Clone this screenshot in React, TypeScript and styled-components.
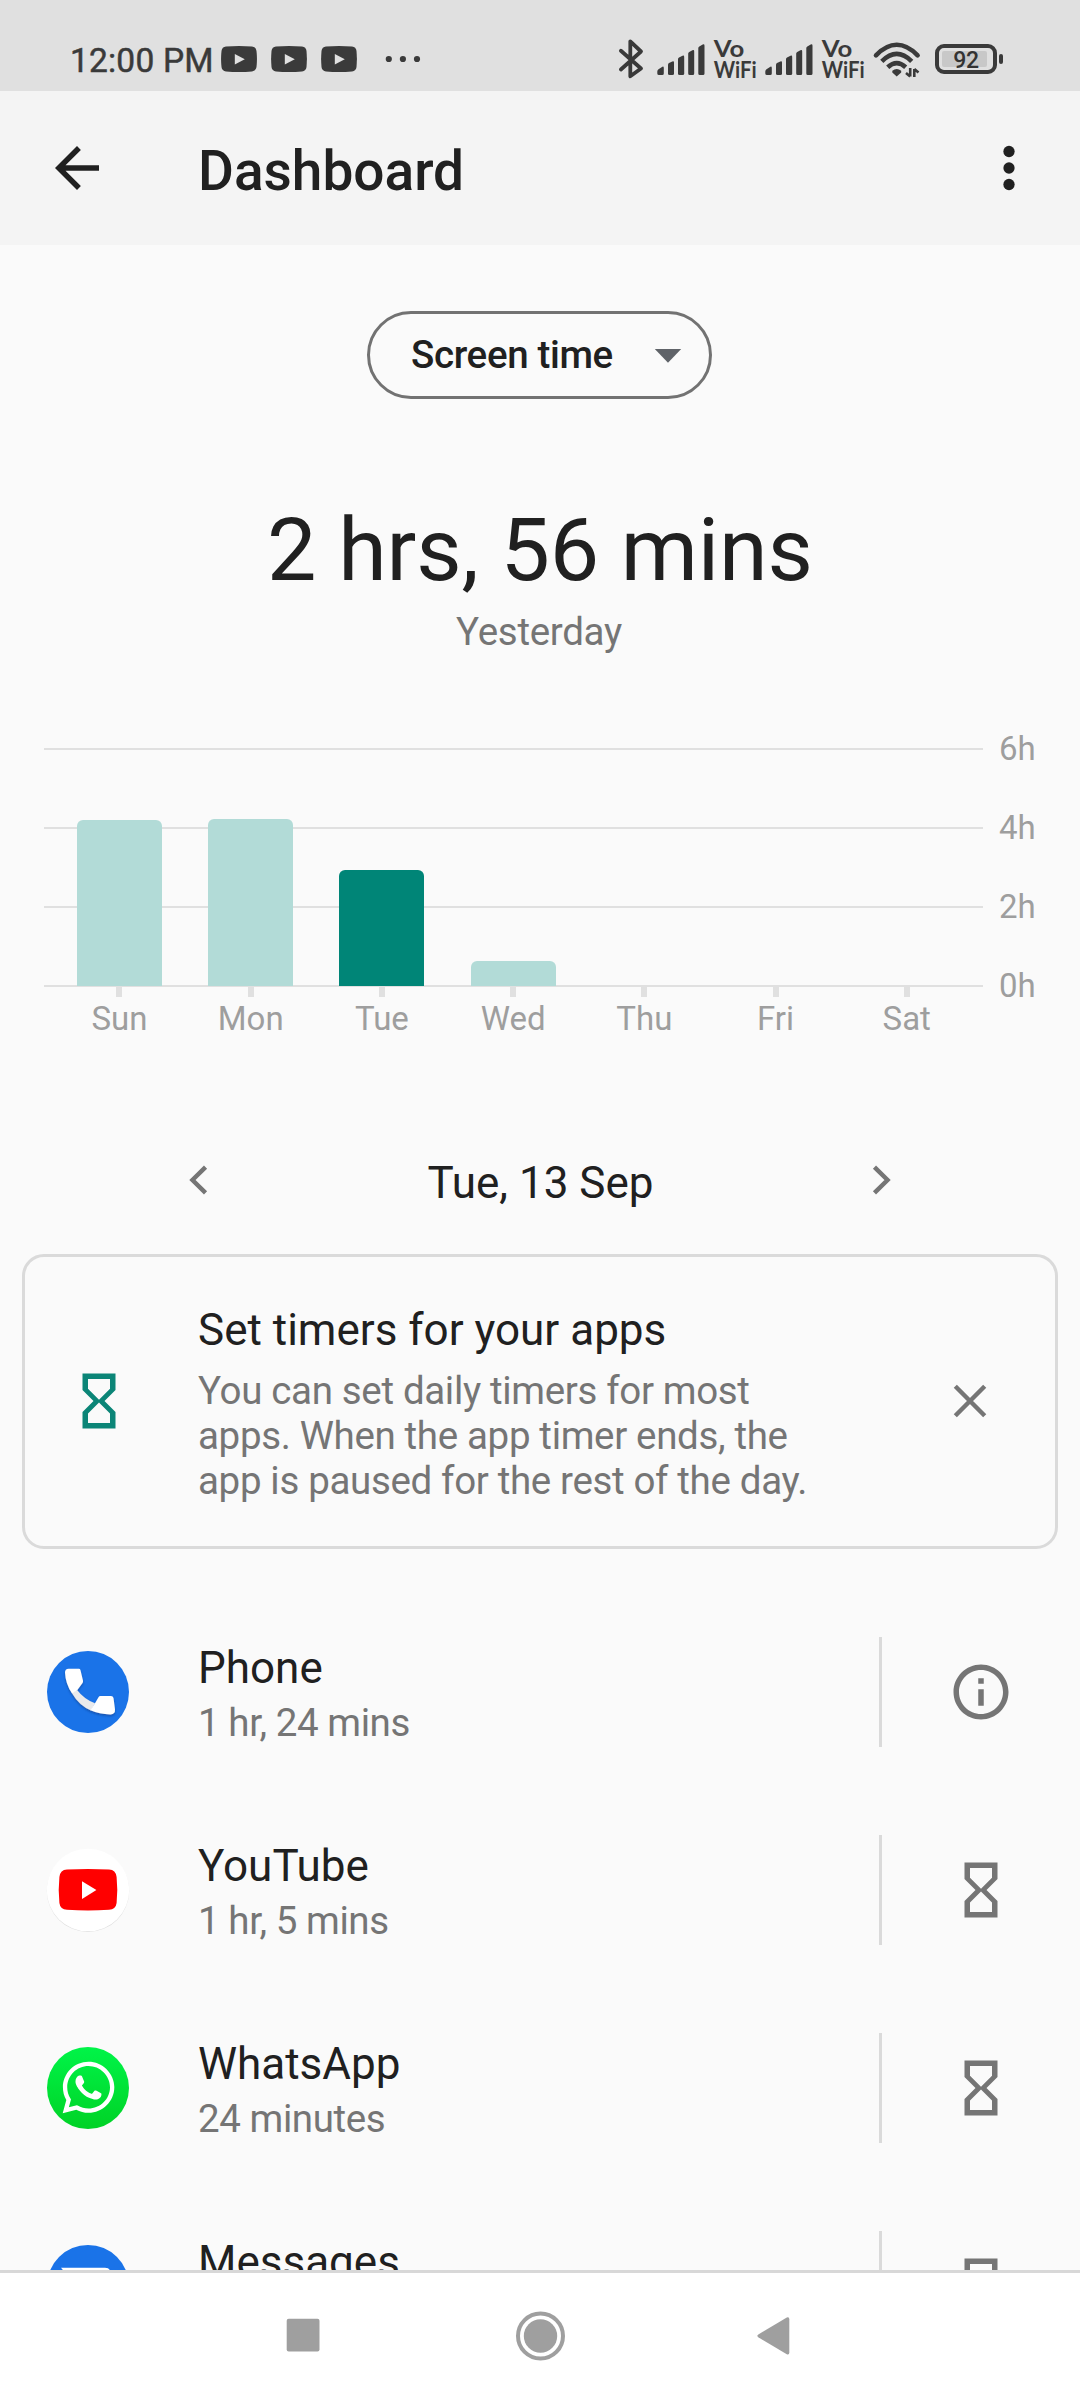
import React from 'react';
import styled, { createGlobalStyle } from 'styled-components';
import { FaWhatsapp } from 'react-icons/fa';

const GlobalStyle = createGlobalStyle`
  body {
    margin: 0;
    background: #fafafa;
  }
`;

const ink = '#202020';
const muted = '#757575';
const rule = '#dadada';

const Screen = styled.div`
  display: flex;
  flex-direction: column;
  width: 1080px;
  height: 2400px;
  overflow: hidden;
  background: #fafafa;
  color: ${ink};
  font-family: Roboto, 'Noto Sans', sans-serif;
`;

/* ---------- status bar ---------- */

const StatusBar = styled.div`
  display: flex;
  justify-content: space-between;
  box-sizing: border-box;
  height: 91px;
  padding: 27px 77px 0 70px;
  background: #e0e0e0;
  color: #3a3a3a;
`;

const StatusGroup = styled.div`
  display: flex;
  align-items: flex-start;
  height: 64px;
`;

const Clock = styled.span`
  width: 151px;
  padding-top: 14px;
  font-size: 33.5px;
  line-height: 40px;
  letter-spacing: 0.2px;
  white-space: nowrap;
  -webkit-text-stroke: 0.5px currentColor;
`;

const NotificationIcons = styled.div`
  display: flex;
  gap: 14px;
  margin-right: 28px;
`;

const StatusGlyph = styled.svg<{ $gap?: number }>`
  display: block;
  flex: none;
  margin-left: ${(p) => p.$gap ?? 0}px;
  overflow: visible;
`;

const CarrierText = styled.text`
  fill: #3a3a3a;
  font-family: Lato, sans-serif;
  font-size: 23.3px;
  font-weight: 700;
`;

const Battery = styled.div`
  display: flex;
  align-items: center;
  height: 30px;
  margin: 17px 0 0 15px;
`;

const BatteryShell = styled.div`
  box-sizing: border-box;
  display: flex;
  width: 62px;
  height: 30px;
  padding: 3px;
  border: 4px solid #3a3a3a;
  border-radius: 9px;
`;

const BatteryCharge = styled.div`
  width: 45px;
  height: 16px;
  border-radius: 2px;
  background: #c8c8c8;
  color: #333;
  font-size: 23px;
  font-weight: 500;
  line-height: 20px;
  text-align: center;
  text-indent: 3px;
  letter-spacing: -0.4px;
`;

const BatteryNub = styled.div`
  width: 4px;
  height: 10px;
  margin-left: 2px;
  border-radius: 2px;
  background: #3a3a3a;
`;

const SignalBars = ({ gap }: { gap: number }) => (
  <StatusGlyph $gap={gap} width="48" height="64" viewBox="0 0 48 64" fill="#3a3a3a">
    <path d="M0.3 44.5Q0.3 43 1.5 42.3L5 39.9Q6.8 39 6.8 41V46.5Q6.8 48 5.3 48H2Q0.3 48 0.3 46.5Z" />
    <path d="M11 37.5Q11 36.6 12 36L15.3 34.5Q17 33.8 17 35.5V46.5Q17 48 15.5 48H12.5Q11 48 11 46.5Z" />
    <path d="M21 32Q21 31 22 30.5L25.5 28.8Q27.2 28 27.2 30V46.5Q27.2 48 25.7 48H22.5Q21 48 21 46.5Z" />
    <path d="M31.2 26.5Q31.2 25.5 32.2 25L35.4 23.3Q37.2 22.5 37.2 24.5V46.5Q37.2 48 35.7 48H32.7Q31.2 48 31.2 46.5Z" />
    <path d="M41.3 21Q41.3 20 42.3 19.5L45.7 17.6Q47.5 16.8 47.5 18.8V46.5Q47.5 48 46 48H42.8Q41.3 48 41.3 46.5Z" />
  </StatusGlyph>
);

const VoWifi = ({ gap }: { gap: number }) => (
  <StatusGlyph $gap={gap} width="42" height="64" viewBox="0 0 42 64">
    <CarrierText x="-0.3" y="29.9" textLength="30.6" lengthAdjust="spacingAndGlyphs">
      Vo
    </CarrierText>
    <CarrierText x="-0.3" y="51.4" textLength="43" lengthAdjust="spacingAndGlyphs">
      WiFi
    </CarrierText>
  </StatusGlyph>
);

const VideoBadge = () => (
  <StatusGlyph width="36" height="64" viewBox="0 0 36 64">
    <path
      fill="#3a3a3a"
      d="M5 19.6Q18 18.4 31 19.6Q35 20 35.5 24Q36.4 32 35.5 40Q35 44 31 44.4Q18 45.4 5 44.4Q1 44 .5 40Q-.4 32 .5 24Q1 20 5 19.6Z"
    />
    <path fill="#e0e0e0" d="M13.8 27V37.6L23.8 32.3Z" />
  </StatusGlyph>
);

/* ---------- app bar ---------- */

const AppBar = styled.header`
  display: flex;
  align-items: center;
  box-sizing: border-box;
  height: 154px;
  padding: 0 38px 0 44px;
  background: #f4f4f4;
`;

const Title = styled.h1`
  flex: 1;
  margin: 5px 0 0 88px;
  font-size: 55px;
  font-weight: 500;
  line-height: 64px;
`;

const Icon = styled.svg<{ $size: number; $color: string }>`
  display: block;
  flex: none;
  width: ${(p) => p.$size}px;
  height: ${(p) => p.$size}px;
  fill: ${(p) => p.$color};
`;

const LineIcon = styled.svg`
  display: block;
  flex: none;
  width: 56px;
  height: 56px;
  fill: none;
  stroke: ${muted};
  stroke-width: 1.9;
`;

/* ---------- summary ---------- */

const Content = styled.main`
  display: flex;
  flex: 1;
  flex-direction: column;
  min-height: 0;
  overflow: hidden;
`;

const MetricSelect = styled.button`
  box-sizing: border-box;
  display: flex;
  flex: none;
  align-items: center;
  align-self: center;
  justify-content: space-between;
  width: 345px;
  height: 88px;
  margin: 66px 1px 0 0;
  padding: 0 8px 0 41px;
  border: 3px solid #727272;
  border-radius: 44px;
  background: none;
  color: ${ink};
  font: 500 38.5px/46px Roboto, sans-serif;
  letter-spacing: -0.35px;
`;

const Total = styled.div`
  flex: none;
  margin-top: 99px;
  font-size: 88px;
  line-height: 104px;
  letter-spacing: -0.12px;
  text-align: center;
`;

const TotalDay = styled.div`
  flex: none;
  margin-top: 7px;
  padding-right: 2px;
  color: ${muted};
  font-size: 38.5px;
  line-height: 46px;
  letter-spacing: -0.3px;
  text-align: center;
`;

/* ---------- chart ---------- */

const Chart = styled.section`
  display: flex;
  flex: none;
  gap: 16px;
  height: 291px;
  margin: 93px 0 0 44px;
  color: #9e9e9e;
  font-size: 33px;
  line-height: 40px;
`;

const Plot = styled.div`
  display: grid;
  width: 939px;
`;

const GridLines = styled.div`
  display: flex;
  grid-area: 1 / 1;
  flex-direction: column;
  justify-content: space-between;
  height: 239px;
`;

const GridLine = styled.div`
  height: 2px;
  background: #e0e0e0;
`;

const Days = styled.div`
  display: grid;
  grid-area: 1 / 1;
  grid-template-columns: repeat(7, 1fr);
  padding: 0 10.7px 0 9.9px;
`;

const Day = styled.div`
  display: grid;
  grid-template-rows: 238px 11px 40px;
  justify-items: center;
`;

const Bar = styled.div<{ $height: number; $active: boolean }>`
  align-self: end;
  width: 85px;
  height: ${(p) => p.$height}px;
  border-radius: 6px 6px 0 0;
  background: ${(p) => (p.$active ? '#008577' : '#b2dbd7')};
`;

const Tick = styled.div`
  width: 6px;
  background: #e0e0e0;
`;

const DayName = styled.span`
  padding-top: 2px;
`;

const HourScale = styled.div`
  display: flex;
  flex-direction: column;
  justify-content: space-between;
  height: 277px;
  margin-top: -19px;
`;

const days = [
  { name: 'Sun', height: 166 },
  { name: 'Mon', height: 167 },
  { name: 'Tue', height: 116, active: true },
  { name: 'Wed', height: 25 },
  { name: 'Thu', height: 0 },
  { name: 'Fri', height: 0 },
  { name: 'Sat', height: 0 },
];

const hours = ['6h', '4h', '2h', '0h'];

/* ---------- date switcher ---------- */

const DateRow = styled.div`
  display: flex;
  flex: none;
  justify-content: space-between;
  height: 57px;
  margin-top: 113px;
  padding: 0 171px;
`;

const DateText = styled.span`
  padding: 5px 0 0 1px;
  font-size: 44px;
  line-height: 52px;
`;

/* ---------- tip card ---------- */

const TipCard = styled.section`
  box-sizing: border-box;
  display: flex;
  flex: none;
  align-items: center;
  height: 295px;
  margin: 45px 22px 0;
  padding: 0 57px 1px 41px;
  border: 3px solid ${rule};
  border-radius: 22px;
`;

const TipText = styled.div`
  flex: 1;
  align-self: flex-start;
  padding: 47px 0 0 66px;
`;

const ItemTitle = styled.div`
  font-size: 44px;
  line-height: 52px;
`;

const TipBody = styled.p`
  width: 620px;
  margin: 12px 0 0;
  color: ${muted};
  font-size: 38.5px;
  line-height: 45px;
  letter-spacing: -0.34px;
`;

/* ---------- app list ---------- */

const AppList = styled.ul`
  flex: none;
  margin: 44px 0 0;
  padding: 0;
  list-style: none;
`;

const AppRow = styled.li`
  display: flex;
  align-items: center;
  height: 198px;
  padding: 0 66px 0 47px;
`;

const AppText = styled.div`
  flex: 1;
  min-height: 104px;
  padding: 4px 0 0 69px;
`;

const AppTime = styled.div`
  margin-top: 6px;
  color: ${muted};
  font-size: 38.5px;
  line-height: 46px;
  letter-spacing: -0.42px;
`;

const Divider = styled.div`
  width: 3px;
  height: 110px;
  margin-right: 66px;
  background: ${rule};
`;

const AppIcon = styled.svg`
  display: block;
  flex: none;
  width: 82px;
  height: 82px;
  overflow: visible;
`;

const WhatsAppDisc = styled.div`
  box-sizing: border-box;
  display: flex;
  flex: none;
  justify-content: center;
  width: 82px;
  height: 82px;
  padding-top: 11px;
  border-radius: 50%;
  background: linear-gradient(#00f448, #00d226);
  color: #fff;
`;

const HourglassIcon = ({ color }: { color: string }) => (
  <Icon $size={66} $color={color} viewBox="0 0 24 24">
    <path d="M6 2v6h.01L6 8.01 10 12l-4 4 .01.01H6V22h12v-5.99h-.01L18 16l-4-4 4-3.99-.01-.01H18V2H6zm10 14.5V20H8v-3.5l4-4 4 4zm-4-5l-4-4V4h8v3.5l-4 4z" />
  </Icon>
);

const InfoIcon = () => (
  <Icon $size={66} $color={muted} viewBox="0 0 24 24">
    <path d="M11 7h2v2h-2zm0 4h2v6h-2zm1-9C6.48 2 2 6.48 2 12s4.48 10 10 10 10-4.48 10-10S17.52 2 12 2zm0 18c-4.41 0-8-3.59-8-8s3.59-8 8-8 8 3.59 8 8-3.59 8-8 8z" />
  </Icon>
);

const PhoneLogo = () => (
  <AppIcon viewBox="0 0 82 82">
    <defs>
      <filter id="handsetShadow" x="-20%" y="-20%" width="140%" height="150%">
        <feDropShadow dx="0" dy="1.6" stdDeviation="1.3" floodColor="#0b3a86" floodOpacity="0.6" />
      </filter>
    </defs>
    <circle cx="41" cy="41" r="41" fill="#1a73e8" />
    <g filter="url(#handsetShadow)">
      <path fill="#e9eaec" d="M24.5 41.5L30.3 39.2Q37 48 48 52.3L44 59.5Q32 54.5 24.5 41.5Z" />
      <path fill="#fff" d="M21.6 17.8H31.8Q33.2 17.8 33.5 19.2L36 29.8Q36.2 31 35.5 32L30 39.5L25 42.3Q18.5 33 18 21.5Q18 18 21.6 17.8Z" />
      <path fill="#fff" d="M53.5 45H64Q66 45 66.5 47L68 58.5Q68.3 63.3 63.5 63.4Q52.5 63.3 43.5 59.3L48 52.3L51.5 46.3Q52.1 45 53.5 45Z" />
    </g>
  </AppIcon>
);

const YouTubeLogo = () => (
  <AppIcon viewBox="0 0 82 82">
    <circle cx="41" cy="41.8" r="41.2" fill="#dedede" />
    <circle cx="41" cy="41" r="41.3" fill="#fff" />
    <path
      fill="#f00"
      d="M20 20.6Q41 19.2 62 20.6Q68.8 21 69.6 28Q71 41 69.6 54Q68.8 60.400 62 60.800Q41 62 20 60.800Q13.2 60.400 12.4 54Q11 41 12.4 28Q13.2 21 20 20.6Z"
    />
    <path fill="#fff" d="M35 32.3V50L49.4 41.1Z" />
  </AppIcon>
);

const WhatsAppLogo = () => (
  <WhatsAppDisc>
    <FaWhatsapp size={59} />
  </WhatsAppDisc>
);

const MessagesLogo = () => (
  <AppIcon viewBox="0 0 82 82">
    <circle cx="41" cy="41" r="41" fill="#1a73e8" />
    <path fill="#fff" d="M14 22.7H58Q63.5 22.7 63.5 28V52Q63.5 57.5 58 57.5H27Q21.5 57.5 21.5 52V32Z" />
  </AppIcon>
);

const apps = [
  { name: 'Phone', time: '1 hr, 24 mins', Logo: PhoneLogo, info: true },
  { name: 'YouTube', time: '1 hr, 5 mins', Logo: YouTubeLogo },
  { name: 'WhatsApp', time: '24 minutes', Logo: WhatsAppLogo },
  { name: 'Messages', Logo: MessagesLogo },
];

/* ---------- navigation bar ---------- */

const NavBar = styled.nav`
  box-sizing: border-box;
  display: flex;
  flex: none;
  align-items: center;
  justify-content: center;
  gap: 175px;
  height: 130px;
  border-top: 3px solid #d8d8d8;
  background: #fff;
`;

const NavIcon = styled.svg`
  display: block;
  width: 60px;
  height: 60px;
  fill: #9f9f9f;
`;

export default function App() {
  return (
    <Screen>
      <GlobalStyle />
      <StatusBar>
        <StatusGroup>
          <Clock>12:00 PM</Clock>
          <NotificationIcons>
            <VideoBadge />
            <VideoBadge />
            <VideoBadge />
          </NotificationIcons>
          <StatusGlyph width="36" height="64" viewBox="0 0 36 64" fill="#3a3a3a">
            <circle cx="3.8" cy="32" r="3.1" />
            <circle cx="17.9" cy="32" r="3.1" />
            <circle cx="32" cy="32" r="3.1" />
          </StatusGlyph>
        </StatusGroup>
        <StatusGroup>
          <StatusGlyph width="24" height="64" viewBox="0 0 24 64" fill="none" stroke="#3a3a3a" strokeWidth="3.8" strokeLinecap="round" strokeLinejoin="round">
            <path d="M1.9 23.8L22 41.5L11.3 49.3V14.3L22 24.5L1.9 42.5" />
          </StatusGlyph>
          <SignalBars gap={14} />
          <VoWifi gap={9} />
          <SignalBars gap={9} />
          <VoWifi gap={9} />
          <StatusGlyph $gap={10} width="46" height="64" viewBox="0 0 46 64" fill="none" stroke="#3a3a3a" strokeWidth="4.6">
            <path d="M2 28.3Q22.7 7.3 43.6 28.3" strokeLinecap="round" />
            <path d="M7.8 34.3Q22.7 19.5 37.7 34.3" />
            <path d="M13.7 40.3Q22.7 32.1 31.7 40.3" />
            <path d="M18.3 43.7Q22.7 40.5 27.2 43.7V45.5L22.7 49.4L18.3 45.5Z" fill="#3a3a3a" stroke="none" />
            <path d="M36.2 41V49.5M36.2 49.5L32 46M40.3 50V42M40.3 42L44.5 45.5" strokeWidth="2.6" />
          </StatusGlyph>
          <Battery>
            <BatteryShell>
              <BatteryCharge>92</BatteryCharge>
            </BatteryShell>
            <BatteryNub />
          </Battery>
        </StatusGroup>
      </StatusBar>

      <AppBar>
        <Icon $size={66} $color={ink} viewBox="0 0 24 24">
          <path d="M20 11H7.83l5.59-5.59L12 4l-8 8 8 8 1.41-1.41L7.83 13H20v-2z" />
        </Icon>
        <Title>Dashboard</Title>
        <Icon $size={66} $color={ink} viewBox="0 0 24 24">
          <circle cx="12" cy="6" r="2.05" />
          <circle cx="12" cy="12" r="2.05" />
          <circle cx="12" cy="18" r="2.05" />
        </Icon>
      </AppBar>

      <Content>
        <MetricSelect>
          Screen time
          <Icon $size={66} $color="#5f6368" viewBox="0 0 24 24">
            <path d="M7.2 9.8l4.8 5 4.8-5z" />
          </Icon>
        </MetricSelect>
        <Total>2 hrs, 56 mins</Total>
        <TotalDay>Yesterday</TotalDay>

        <Chart>
          <Plot>
            <GridLines>
              {hours.map((h) => (
                <GridLine key={h} />
              ))}
            </GridLines>
            <Days>
              {days.map((d) => (
                <Day key={d.name}>
                  <Bar $height={d.height} $active={!!d.active} />
                  <Tick />
                  <DayName>{d.name}</DayName>
                </Day>
              ))}
            </Days>
          </Plot>
          <HourScale>
            {hours.map((h) => (
              <span key={h}>{h}</span>
            ))}
          </HourScale>
        </Chart>

        <DateRow>
          <LineIcon viewBox="0 0 24 24">
            <path d="M14.8 6.5L9.2 12l5.6 5.5" />
          </LineIcon>
          <DateText>Tue, 13 Sep</DateText>
          <LineIcon viewBox="0 0 24 24">
            <path d="M9.2 6.5l5.6 5.5-5.6 5.5" />
          </LineIcon>
        </DateRow>

        <TipCard>
          <HourglassIcon color="#0b8577" />
          <TipText>
            <ItemTitle>Set timers for your apps</ItemTitle>
            <TipBody>
              You can set daily timers for most apps. When the app timer ends, the app is paused for the rest of the day.
            </TipBody>
          </TipText>
          <LineIcon viewBox="0 0 24 24">
            <path d="M5.7 5.7l12.6 12.6M18.3 5.7L5.7 18.3" />
          </LineIcon>
        </TipCard>

        <AppList>
          {apps.map(({ name, time, Logo, info }) => (
            <AppRow key={name}>
              <Logo />
              <AppText>
                <ItemTitle>{name}</ItemTitle>
                {time && <AppTime>{time}</AppTime>}
              </AppText>
              <Divider />
              {info ? <InfoIcon /> : <HourglassIcon color={muted} />}
            </AppRow>
          ))}
        </AppList>
      </Content>

      <NavBar>
        <NavIcon viewBox="0 0 60 60">
          <rect x="11.7" y="11.7" width="32.8" height="32.8" rx="2" />
        </NavIcon>
        <NavIcon viewBox="0 0 60 60">
          <circle cx="30.5" cy="29" r="22.5" fill="none" stroke="#9f9f9f" strokeWidth="4" />
          <circle cx="30.5" cy="29" r="16.7" />
        </NavIcon>
        <NavIcon viewBox="0 0 60 60">
          <path d="M13.3 27.4L41.8 10.5Q44.3 9.5 44.3 12.2V45.6Q44.3 48.3 41.8 47.3L13.3 30.3Q11.3 28.8 13.3 27.4Z" />
        </NavIcon>
      </NavBar>
    </Screen>
  );
}
